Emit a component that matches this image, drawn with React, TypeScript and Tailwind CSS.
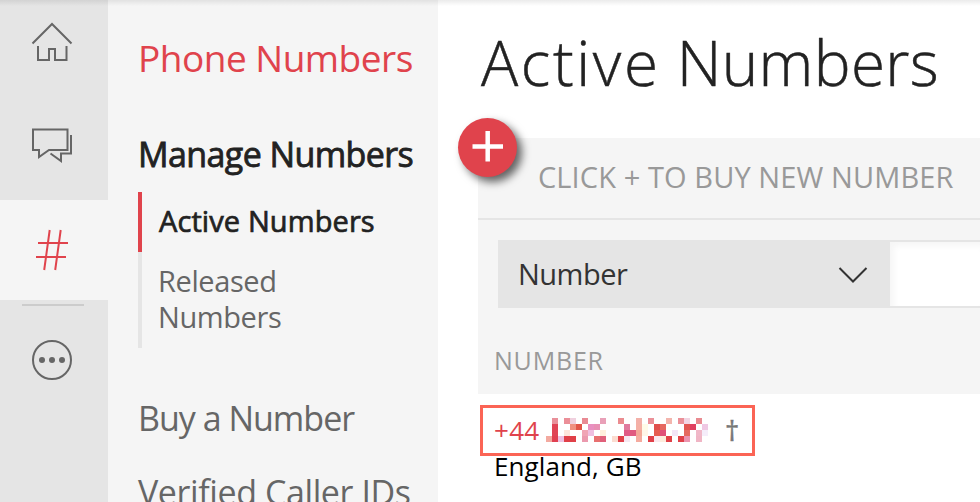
import React from 'react';

const mosaic: Record<number, string>[] = [
  { 1: '#e9909a', 3: '#eb8f98', 4: '#f0d0de', 6: '#e98a94', 9: '#e9a0b8', 12: '#eb8c90', 15: '#f3b0a8', 17: '#eb9098', 20: '#f3b5ad', 22: '#eb9098', 23: '#f2d5e3', 25: '#e98a90' },
  { 1: '#e04455', 4: '#f09080', 5: '#e25548', 7: '#e890c0', 8: '#e890b4', 13: '#e07a9e', 15: '#f5b0a5', 16: '#fffbe8', 18: '#e04f4c', 19: '#e66860', 23: '#e25550', 24: '#e04060', 26: '#efc8e3' },
  { 1: '#e04455', 3: '#fde6dc', 6: '#f0a5b5', 7: '#efbfe0', 9: '#fff0dd', 13: '#e05a86', 14: '#e05a80', 15: '#f3a898', 16: '#fff5e8', 18: '#e65c50', 19: '#e04f78', 21: '#f3e5f7', 23: '#e56a60', 25: '#f0b8c8', 26: '#f5edfa' },
  { 0: '#f3aaa0', 1: '#e04050', 2: '#eec0e2', 3: '#e04048', 4: '#e04048', 6: '#eb9aae', 8: '#e87070', 9: '#e0607a', 11: '#fbdcd0', 12: '#e04048', 13: '#f5e8f2', 15: '#f5ab9f', 17: '#e04048', 18: '#fae8ee', 19: '#fdecdc', 20: '#e04048', 22: '#e04048', 23: '#eb95b0', 25: '#f0b5c5' },
];

function MaskedDigits() {
  return (
    <svg width="162" height="24" className="mb-0.5 ml-[3px]" shapeRendering="crispEdges">
      {mosaic.map((row, y) =>
        Object.entries(row).map(([x, color]) => (
          <rect key={`${x}-${y}`} x={Number(x) * 6} y={y * 6} width="6" height="6" fill={color} />
        )),
      )}
    </svg>
  );
}

function Rail() {
  return (
    <nav className="flex w-[108px] shrink-0 flex-col bg-[#e5e5e5]">
      <a className="h-[100px]">
        <svg width="108" height="100" fill="none" stroke="#666" strokeWidth="2">
          <path d="M32.5 43.5 52 24l19.5 19.5M38 46v14h11V49h6v11h11.5V46" />
        </svg>
      </a>
      <a className="h-[100px]">
        <svg width="108" height="100" fill="none" stroke="#666" strokeWidth="2">
          <path d="M33 29.5h34.500v20.500H49l-10 7v-7h-6zM71 35v18.500H61v7.500l-10.500-7.500" />
        </svg>
      </a>
      <a className="h-[100px] bg-[#f5f5f5]">
        <svg width="108" height="100" fill="none" stroke="#e0434c" strokeWidth="2">
          <path d="M49.700 30 44.200 70M60.700 30 55.200 70M38 43h30M36 57h30" />
        </svg>
      </a>
      <div className="mx-auto mt-1 h-0.5 w-[62px] -translate-x-px bg-[#ccc]" />
      <a className="h-[100px]">
        <svg width="108" height="100" fill="#666">
          <circle cx="52" cy="54" r="19" fill="none" stroke="#666" strokeWidth="2" />
          <circle cx="42" cy="54" r="3" />
          <circle cx="52" cy="54" r="3" />
          <circle cx="62" cy="54" r="3" />
        </svg>
      </a>
    </nav>
  );
}

function Menu() {
  return (
    <aside className="flex w-[330px] shrink-0 flex-col bg-[#f5f5f5] pt-[34px] pl-[30px] whitespace-nowrap text-[#666]">
      <h2 className="text-[37px] leading-[48px] tracking-[-0.5px] text-[#e0434c]">Phone Numbers</h2>
      <h3 className="mt-[49px] text-[34px] leading-[46px] tracking-[-0.6px] text-[#222] [-webkit-text-stroke:0.8px_#222]">Manage Numbers</h3>
      <ul className="mt-[15px] text-[29px]">
        <li className="h-[60px] border-l-4 border-[#e0434c] pl-[17px] leading-[58px] tracking-[0.1px] text-[#222] [-webkit-text-stroke:0.7px_#222]">
          Active Numbers
        </li>
        <li className="h-[96px] border-l-4 border-[#e5e5e5] pt-[11px] pl-4 leading-[36px] tracking-[-0.4px]">
          Released
          <br />
          Numbers
        </li>
      </ul>
      <a className="mt-[47px] text-[34px] leading-[46px] tracking-[-1px]">Buy a Number</a>
      <a className="mt-[28px] text-[34px] leading-[46px] tracking-[-0.4px]">Verified Caller IDs</a>
    </aside>
  );
}

export default function App() {
  return (
    <div className="relative flex h-[502px] w-[980px] overflow-hidden bg-white font-['Open_Sans','Noto_Sans',sans-serif]">
      <Rail />
      <Menu />
      <main className="flex min-w-0 flex-1 flex-col pt-[22px] pl-10 whitespace-nowrap">
        <h1 className="pl-[3px] text-[62px] leading-[80px] font-light text-[#222] [-webkit-text-stroke:0.5px_#222]">
          <span className="tracking-[2.600px]">Active</span> <span className="tracking-[0.300px]">Numbers</span>
        </h1>
        <section className="relative mt-9 flex h-[256px] flex-col bg-[#f5f5f5]">
          <button className="absolute -top-5 -left-5 h-[59px] w-[59px] rounded-full bg-[#e0434c] shadow-[5px_5px_8px_rgba(0,0,0,0.6)]">
            <svg width="59" height="59" stroke="#fff" strokeWidth="4.500">
              <path d="M14.500 28.500h30.500M29.700 13v30.500" />
            </svg>
          </button>
          <div className="h-[82px] border-b-2 border-[#e5e5e5] pt-[19px] pl-[60px] text-[29px] leading-[40px] tracking-[0.1px] text-[#999]">
            CLICK + TO BUY NEW NUMBER
          </div>
          <div className="mt-5 ml-5 flex h-[68px]">
            <div className="flex w-[392px] items-center justify-between bg-[#e5e5e5] pr-[22px] pl-5 text-[29px] text-[#333]">
              <span className="leading-[68px] tracking-[-0.5px]">Number</span>
              <svg width="30" height="18" fill="none" stroke="#333" strokeWidth="2">
                <path d="M1.500 3 15 16.500 28.500 3" />
              </svg>
            </div>
            <div className="flex-1 border-y-2 border-[#e5e5e5] bg-white shadow-[inset_4px_4px_6px_rgba(0,0,0,0.04)]" />
          </div>
          <div className="mt-[35px] pl-4 text-[25px] leading-[34px] tracking-[0.8px] text-[#999]">NUMBER</div>
        </section>
        <div className="mt-[11px] ml-[2px] flex h-[51px] w-[275px] items-center border-[3px] border-[#fb6455] pl-[11px] text-[26px]">
          <span className="w-[49px] leading-[45px] tracking-[0.3px] text-[#e0434c]">+44</span>
          <MaskedDigits />
          <span className="ml-[17px] text-[28px] leading-[45px] text-[#777] [-webkit-text-stroke:0.4px_#777]">†</span>
        </div>
        <div className="-mt-2 pl-4 text-[26px] leading-[36px] tracking-[0.1px] text-black">England, GB</div>
      </main>
      <div className="pointer-events-none absolute inset-x-0 top-0 h-[6px] bg-gradient-to-b from-black/8 to-transparent" />
    </div>
  );
}
